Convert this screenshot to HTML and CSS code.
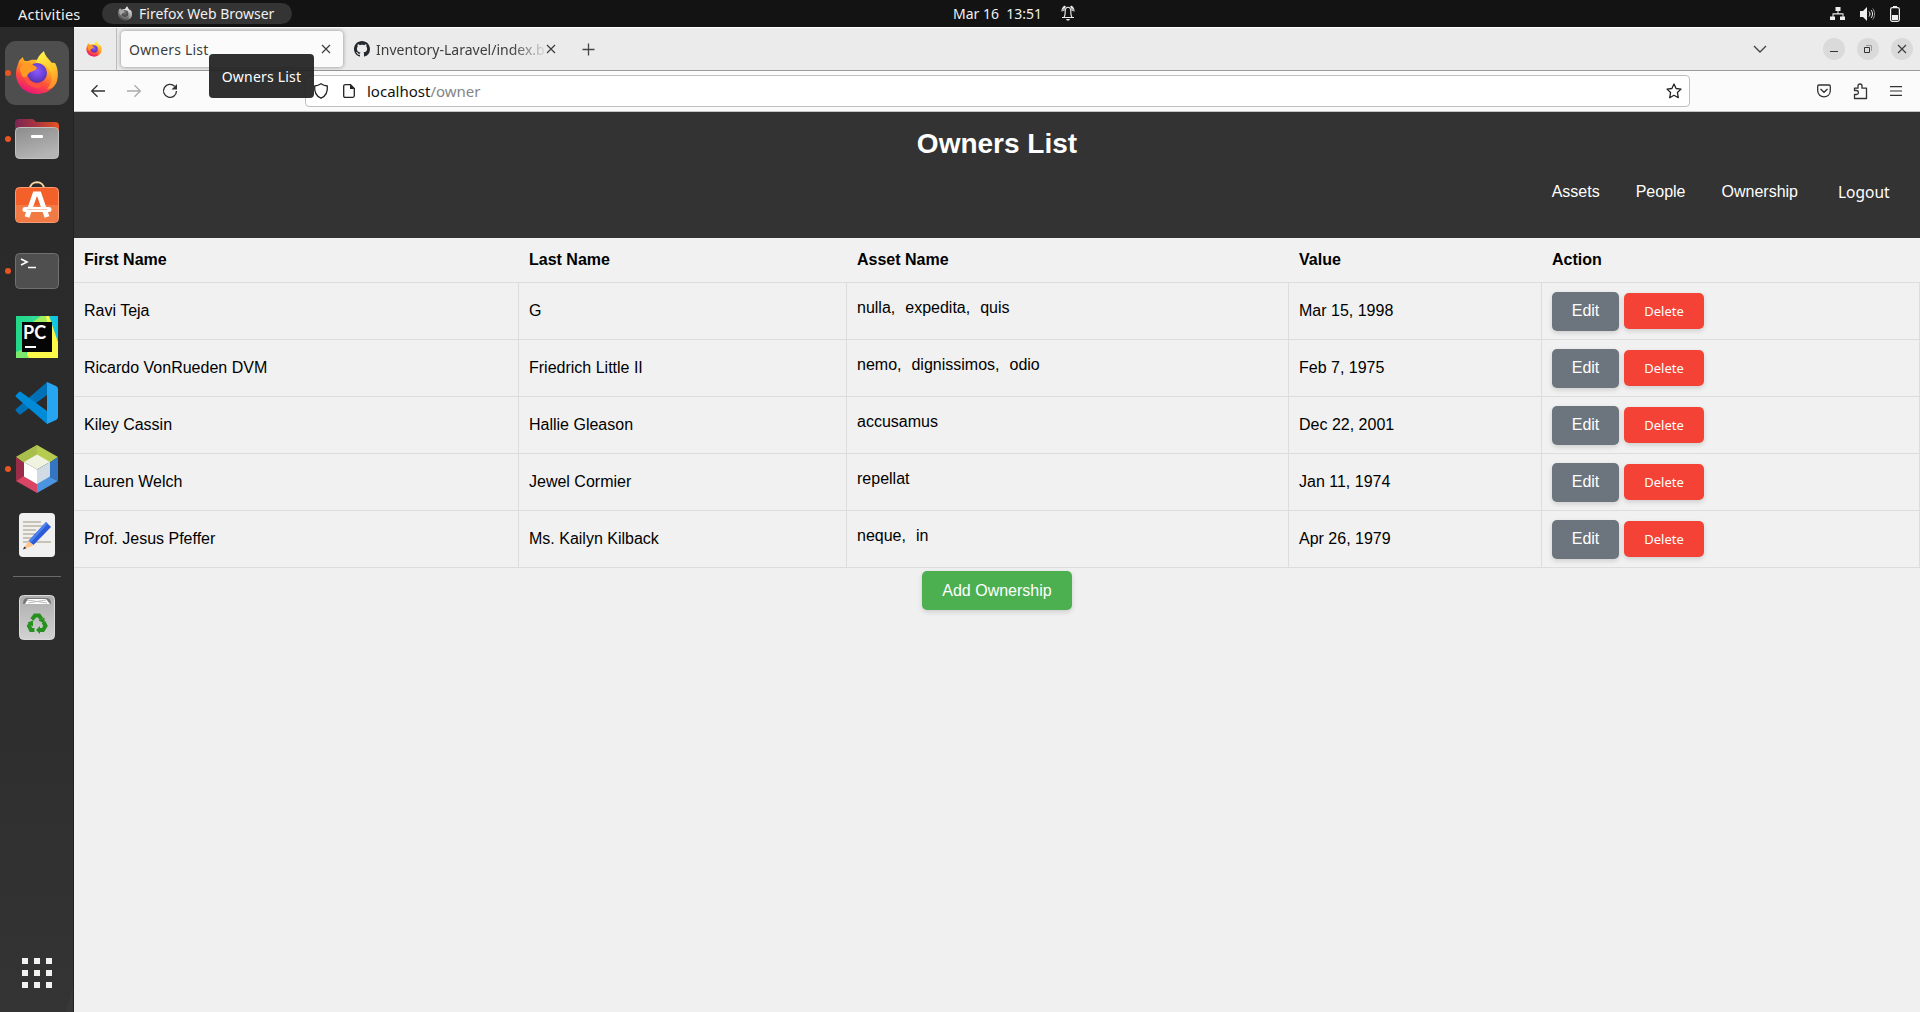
FILE: index.html
```html
<!DOCTYPE html>
<html lang="en">
<head>
<meta charset="utf-8">
<title>Owners List</title>
<link rel="stylesheet" href="styles.css">
</head>
<body>
<svg width="0" height="0" class="defs">
  <defs>
    <linearGradient id="ffBody" x1="0.8" y1="0" x2="0.3" y2="1"><stop offset="0" stop-color="#ffe43c"/><stop offset=".35" stop-color="#ffa423"/><stop offset=".65" stop-color="#ff4f3b"/><stop offset="1" stop-color="#e6127d"/></linearGradient>
    <linearGradient id="ffTail" x1="0.4" y1="0" x2="0.7" y2="1"><stop offset="0" stop-color="#fff24a"/><stop offset=".5" stop-color="#ffc72d"/><stop offset="1" stop-color="#ff8a2a"/></linearGradient>
    <radialGradient id="ffGlobe" cx=".5" cy=".4" r=".6"><stop offset="0" stop-color="#9059ff"/><stop offset=".6" stop-color="#6a42d8"/><stop offset="1" stop-color="#5b2fa8"/></radialGradient>
    <linearGradient id="folderBack"><stop offset="0" stop-color="#7b2653"/><stop offset=".5" stop-color="#a8343f"/><stop offset="1" stop-color="#e95420"/></linearGradient>
    <linearGradient id="folderFront" x2="0.4" y2="1"><stop offset="0" stop-color="#8c8c8c"/><stop offset="1" stop-color="#b4b4b4"/></linearGradient>
    <linearGradient id="trashBody" x2="0" y2="1"><stop offset="0" stop-color="#adadad"/><stop offset="1" stop-color="#d2d2d2"/></linearGradient>
    <linearGradient id="pcBack" x2="1"><stop offset="0" stop-color="#21d789"/><stop offset=".55" stop-color="#35dc9a"/><stop offset="1" stop-color="#07c3f2"/></linearGradient>
    <symbol id="firefox" viewBox="0 0 42 44">
      <path fill="url(#ffBody)" d="M3 10c1-2 3-3 4-4 0 2 1 3 2 4 2 0 4 0 6-1 0 0 8-1 12 2l12 1c4 7 4 17-2 24-4 5-10 7-16 7C9 43 0 34 0 23 0 17 2 14 3 10z"/>
      <path fill="url(#ffTail)" d="M20 12C21 7 24 3 28 0c1 5 4 7 7 11 2 2 2 4 3 3 4 5 5 15 1 20-2 3-5 4-8 4 5-5 6-13 3-18-3-6-8-8-14-8z"/>
      <circle cx="21" cy="22" r="10" fill="url(#ffGlobe)"/>
      <path fill="#ff9a22" d="M4 17c3-4 8-6 12-4 2 2 4 2 5 4-1 3-5 3-8 5-2 2-3 4-2 6-4-1-7-5-7-11z"/>
      <path fill="none" stroke="#ff5040" stroke-width="4" d="M10 26c2 7 9 10 15 8"/>
    </symbol>
    <symbol id="cross" viewBox="0 0 10 10"><path d="M1 1l8 8M9 1L1 9" fill="none" stroke="currentColor" stroke-width="1.2"/></symbol>
  </defs>
</svg>

<header class="topbar">
  <span class="activities">Activities</span>
  <span class="app-pill"><svg class="pill-icon" width="14" height="15"><use href="#firefox"/></svg><span>Firefox Web Browser</span></span>
  <span class="clock">Mar 16&nbsp; 13:51</span>
  <svg class="bell" width="14" height="16" viewBox="0 0 14 16" fill="none" stroke="#eee" stroke-width="1.1"><path d="M1 12.5h12M3 12c1-1 1.2-3 1.2-5.500C4.200 3.500 5 2.200 7 2.200s2.800 1.300 2.800 4.300C9.800 9 10 11 11 12M3.700 1C1.800 2.300 1 4 1 6.500M10.300 1C12.200 2.300 13 4 13 6.500M4.500 1.300C3 2.500 2.700 4 2.700 6M9.500 1.300c1.500 1.200 1.800 2.700 1.800 4.700"/><path d="M5 14h4l-1 1.500H6z" fill="#eee" stroke="none"/></svg>
  <div class="tray">
    <svg width="16" height="14" viewBox="0 0 16 14" fill="#eee"><path d="M5.500 0h5v4h-2v2.300h5V9.500H15V13h-5V9.500h2.500V7.500h-9v2H5V13H0V9.500h2.500V6.300h5V4h-2z"/></svg>
    <svg width="16" height="14" viewBox="0 0 16 14"><path d="M0 4h3l4-4v14l-4-4H0z" fill="#eee"/><path d="M9 4.500c1.300 1.500 1.300 3.500 0 5M11 3c2 2.300 2 5.700 0 8" fill="none" stroke="#eee"/><path d="M12.700 1.500c2.500 3 2.500 8 0 11" fill="none" stroke="#999"/></svg>
    <svg width="10" height="16" viewBox="0 0 10 16"><path d="M3 0h4v2H3z" fill="#eee"/><rect x=".6" y="1.600" width="8.800" height="13.800" rx="1.800" fill="none" stroke="#eee" stroke-width="1.2"/><path d="M2 9h6v5H2z" fill="#eee"/></svg>
  </div>
</header>

<div class="desktop">
  <nav class="dock">
    <div class="tile active running"><svg width="42" height="44"><use href="#firefox"/></svg></div>
    <div class="tile running"><svg width="48" height="48" viewBox="0 0 48 48"><path d="M2 8q0-4 4-4h13q2 0 3 2l1 1h19q4 0 4 4v10H2z" fill="url(#folderBack)"/><rect x="2.500" y="12.500" width="43" height="31" rx="4" fill="url(#folderFront)" stroke="#c0c0c0"/><rect x="18" y="20" width="12" height="3" rx="1" fill="#fff"/></svg></div>
    <div class="tile"><svg width="48" height="48" viewBox="0 0 48 48"><path d="M17 8c0-9 14-9 14 0" fill="none" stroke="#f9d9a8" stroke-width="2"/><rect x="2.500" y="6.500" width="43" height="35" rx="4" fill="#f3602a" stroke="#f69b74"/><path d="M3 24h42v13q0 4-4 4H7q-4 0-4-4z" fill="#f27b45"/><path d="M14 36l8-23h4l8 23" fill="none" stroke="#fff" stroke-width="5"/><path d="M12 28.500h24" stroke="#fff" stroke-width="5" stroke-linecap="round"/><path d="M14 28.500h20" stroke="#f8c6af"/></svg></div>
    <div class="tile running"><svg width="48" height="48" viewBox="0 0 48 48"><rect x="2.500" y="6.500" width="43" height="35" rx="4" fill="#4f4f4f" stroke="#707070"/><path d="M8 12l6 3-6 3M15 20.500h8" fill="none" stroke="#fff" stroke-width="1.600"/></svg></div>
    <div class="tile"><svg width="48" height="48" viewBox="0 0 48 48"><path d="M3 3h42v42H3z" fill="url(#pcBack)"/><path d="M28 7l3-4h5l9 26v16H12z" fill="#fcf84a"/><path d="M17 11L28 3h5l2 10z" fill="#a5ed60"/><path d="M3 39l8-3 5 9H3z" fill="#7be76b"/><path d="M9 9h30v30H9z" fill="#050505"/><text x="10" y="25.500" class="pc-text">PC</text><path d="M12 33h11v2H12z" fill="#fff"/></svg></div>
    <div class="tile"><svg width="48" height="48" viewBox="0 0 48 48"><path d="M34 3v13L8 35q-1 1-2 0l-3-3q-1-1 0-2z" fill="#0070b7"/><path d="M8 13q-1-1-2 0l-3 3q-1 1 0 2l31 27V32z" fill="#008bd8"/><path d="M34 3l9 4q2 1 2 3v28q0 2-2 3l-9 4z" fill="#28a5f1"/></svg></div>
    <div class="tile running"><svg width="48" height="48" viewBox="0 0 48 48"><path d="M3 12L24 0v12z" fill="#a9c14d"/><path d="M24 0l21 12-9 6-12-7z" fill="#b4cd50"/><path d="M24 0v11l-13 7-8-6z" fill="#a9bf4b"/><path d="M3 12l8 6v14l-8 4z" fill="#9a2c48"/><path d="M3 36l8-5 13 7v10z" fill="#d94665"/><path d="M45 36l-9-5-12 7v10z" fill="#4b95e0"/><path d="M45 12l-9 6v14l9 4z" fill="#3475c3"/><path d="M24 9.500L37 17l-13 7.500L11 17z" fill="#eff3df"/><path d="M11 17l13 7.500V39l-13-7.500z" fill="#fff"/><path d="M37 17l-13 7.500V39l13-7.500z" fill="#d0dbe4"/></svg></div>
    <div class="tile"><svg width="48" height="48" viewBox="0 0 48 48"><rect x="6" y="2" width="36" height="44" rx="4" fill="#f0f0f0"/><path d="M10 11h18M10 15h21M10 19h13M10 23h16M10 27h10M10 31h28" stroke="#c7c3b5" stroke-width="2"/><path d="M15.500 30L33 11l5 5-17.500 18z" fill="#2c5bd8"/><path d="M15.500 30L33 11l1.700 1.700L17.500 32z" fill="#4b80f0"/><path d="M15.500 30l5 4.500L10 38.500z" fill="#ffc58b"/><path d="M11.300 35.500l2 1.800-3.300 1.200z" fill="#333"/></svg></div>
    <hr class="dock-line">
    <div class="tile"><svg width="48" height="48" viewBox="0 0 48 48"><rect x="6.500" y="1.500" width="35" height="44" rx="4" fill="url(#trashBody)" stroke="#dadada"/><path d="M10 10q0-6 4-6h20q4 0 4 6z" fill="#777"/><path d="M12 10l3-5h18l4 5z" fill="#fff"/><path d="M14 6l20 3M15 9l18-3" stroke="#bbb"/><g fill="none" stroke="#26911f" stroke-width="4"><path d="M19 25.500l3-4h4l2.500 3.500"/><path d="M30.500 28l2 4-2.500 4h-4"/><path d="M21.500 36H18l-2-4 2-3"/></g><path d="M25.500 26.500l6-3v6zM27 32v8l-4-4zM14.500 28.500l5.500-2v6z" fill="#26911f"/></svg></div>
    <div class="tile apps"><svg width="30" height="30" viewBox="0 0 30 30"><path d="M3 0v30M15 0v30M27 0v30" stroke="#f2f2f0" stroke-width="6" stroke-dasharray="6 6"/></svg></div>
  </nav>

  <div class="window">
    <div class="tabstrip">
      <div class="pinned"><svg width="16" height="16"><use href="#firefox"/></svg></div>
      <div class="tab selected"><span class="tab-title">Owners List</span><svg class="close" width="10" height="10"><use href="#cross"/></svg>
        <div class="tooltip">Owners List</div>
      </div>
      <div class="tab second">
        <svg width="16" height="16" viewBox="0 0 16 16"><path fill="#24292f" d="M8 0C3.580 0 0 3.580 0 8c0 3.540 2.290 6.530 5.470 7.590.4.070.55-.17.55-.38 0-.19-.01-.82-.01-1.490-2.010.37-2.530-.49-2.690-.94-.09-.23-.48-.94-.82-1.130-.28-.15-.68-.52-.01-.53.63-.01 1.080.58 1.230.82.720 1.210 1.870.87 2.330.66.070-.52.28-.87.510-1.070-1.780-.2-3.640-.89-3.640-3.950 0-.87.310-1.590.82-2.150-.08-.2-.36-1.020.08-2.120 0 0 .67-.21 2.200.82.640-.18 1.320-.27 2-.27s1.360.09 2 .27c1.530-1.040 2.200-.82 2.200-.82.440 1.100.16 1.920.08 2.120.51.560.82 1.270.82 2.150 0 3.070-1.870 3.750-3.650 3.950.29.250.54.730.54 1.480 0 1.070-.01 1.930-.01 2.200 0 .21.150.46.550.38A8.010 8.010 0 0016 8c0-4.420-3.580-8-8-8z"/></svg>
        <span class="tab-title fading">Inventory-Laravel/index.b</span>
        <svg class="close2" width="10" height="10"><use href="#cross"/></svg>
      </div>
      <svg class="plus" width="13" height="13" viewBox="0 0 13 13"><path d="M6.500.5v12M.5 6.500h12" stroke="#444" stroke-width="1.300"/></svg>
      <svg class="chevron" width="14" height="8" viewBox="0 0 14 8"><path d="M1 1l6 6 6-6" fill="none" stroke="#444" stroke-width="1.400"/></svg>
      <div class="controls">
        <span class="ctl"><svg width="10" height="10"><path d="M1 7.500h8" stroke="#333"/></svg></span>
        <span class="ctl"><svg width="10" height="10"><path d="M1.500 3.500h5v5h-5z" fill="none" stroke="#333"/><path d="M3 1.500h5.500V7" fill="none" stroke="#999"/></svg></span>
        <span class="ctl"><svg width="10" height="10"><use href="#cross"/></svg></span>
      </div>
    </div>

    <div class="toolbar">
      <svg width="16" height="14" viewBox="0 0 16 14" fill="none" stroke="#333" stroke-width="1.300"><path d="M15 7H2M7.500 1.200L1.700 7l5.800 5.800"/></svg>
      <svg width="16" height="14" viewBox="0 0 16 14" fill="none" stroke="#aaa" stroke-width="1.300"><path d="M1 7h13M8.500 1.200L14.300 7l-5.800 5.800"/></svg>
      <svg width="16" height="16" viewBox="0 0 16 16"><path d="M12.600 3.300A6.500 6.500 0 1014.500 8" fill="none" stroke="#333" stroke-width="1.300"/><path d="M15 1v5.500H9.500z" fill="#333"/></svg>
      <div class="urlbar">
        <svg width="16" height="16" viewBox="0 0 16 16" fill="none" stroke="#222" stroke-width="1.300"><path d="M8 .8c2 1.400 4 2 6.300 2.200.5 5.500-1 10-6.300 12.200C2.700 13 1.200 8.500 1.700 3 4 2.800 6 2.200 8 .8z"/></svg>
        <svg width="12" height="14" viewBox="0 0 12 14"><path d="M2.500.7H7.500l3.800 3.800v7.300q0 1.500-1.500 1.500H2.200Q.7 13.300.7 11.800V2.200Q.7.700 2.500.7z" fill="none" stroke="#222" stroke-width="1.300"/><path d="M7 .5v4.500h4.500z" fill="#222"/></svg>
        <span class="url">localhost<span class="path">/owner</span></span>
        <svg class="star" width="16" height="16" viewBox="0 0 16 16"><path d="M8 1l2.100 4.500 4.900.6-3.600 3.400.9 5.200L8 12.300l-4.300 2.400.9-5.200L1 6.100l4.900-.6z" fill="none" stroke="#222" stroke-width="1.300" stroke-linejoin="round"/></svg>
      </div>
      <div class="tools">
        <svg width="14" height="14" viewBox="0 0 14 14" fill="none" stroke="#333" stroke-width="1.300"><path d="M2 1h10q1.300 0 1.300 1.300V6.500c0 8.500-12.600 8.500-12.600 0V2.300Q.7 1 2 1zM3.500 5L7 8.300 10.500 5"/></svg>
        <svg width="15" height="17" viewBox="0 0 15 17" fill="none" stroke="#333" stroke-width="1.300"><path d="M1.500 5.200H5V3q0-2 2-2t2 2v2.200h4.500V15.500H1.500v-4H3.500q2-.3 2-2t-2-2h-2z" stroke-linejoin="round"/></svg>
        <svg width="12" height="10" viewBox="0 0 12 10"><path d="M0 .7h12M0 5h12M0 9.300h12" stroke="#333" stroke-width="1.200"/></svg>
      </div>
    </div>

    <main class="page">
      <div class="banner">
        <h1>Owners List</h1>
        <div class="links"><a>Assets</a><a>People</a><a>Ownership</a><a class="logout">Logout</a></div>
      </div>
      <table class="owners">
        <colgroup><col class="c1"><col class="c2"><col class="c3"><col class="c4"><col class="c5"></colgroup>
        <thead><tr><th>First Name</th><th>Last Name</th><th>Asset Name</th><th>Value</th><th>Action</th></tr></thead>
        <tbody>
          <tr><td>Ravi Teja</td><td>G</td><td class="assets"><span>nulla,</span><span>expedita,</span><span>quis</span></td><td>Mar 15, 1998</td><td><div class="actions"><a class="btn edit">Edit</a><a class="btn delete">Delete</a></div></td></tr>
          <tr><td>Ricardo VonRueden DVM</td><td>Friedrich Little II</td><td class="assets"><span>nemo,</span><span>dignissimos,</span><span>odio</span></td><td>Feb 7, 1975</td><td><div class="actions"><a class="btn edit">Edit</a><a class="btn delete">Delete</a></div></td></tr>
          <tr><td>Kiley Cassin</td><td>Hallie Gleason</td><td class="assets"><span>accusamus</span></td><td>Dec 22, 2001</td><td><div class="actions"><a class="btn edit">Edit</a><a class="btn delete">Delete</a></div></td></tr>
          <tr><td>Lauren Welch</td><td>Jewel Cormier</td><td class="assets"><span>repellat</span></td><td>Jan 11, 1974</td><td><div class="actions"><a class="btn edit">Edit</a><a class="btn delete">Delete</a></div></td></tr>
          <tr><td>Prof. Jesus Pfeffer</td><td>Ms. Kailyn Kilback</td><td class="assets"><span>neque,</span><span>in</span></td><td>Apr 26, 1979</td><td><div class="actions"><a class="btn edit">Edit</a><a class="btn delete">Delete</a></div></td></tr>
        </tbody>
      </table>
      <div class="add-row"><a class="btn add">Add Ownership</a></div>
    </main>
  </div>
</div>
</body>
</html>
```
FILE: styles.css
```css
* { box-sizing: border-box; }
body { margin: 0; height: 1012px; overflow: hidden; display: flex; flex-direction: column; font-family: "Noto Sans", sans-serif; background: #f0f0f0; }
svg { display: block; flex: none; }
.defs { position: absolute; }

.topbar { flex: none; height: 27px; background: #131313; color: #f0f0f0; display: flex; align-items: center; font-size: 14px; white-space: nowrap; }
.activities { margin-left: 18px; width: 84px; font-size: 14.5px; letter-spacing: .2px; }
.app-pill { width: 190px; height: 21px; border-radius: 11px; background: #343434; display: flex; align-items: center; gap: 7px; padding-left: 16px; }
.pill-icon { filter: grayscale(1); }
.clock { margin-left: 661px; width: 108px; }
.bell { margin-top: -1px; }
.tray { margin-left: auto; padding-right: 20px; display: flex; align-items: center; gap: 14px; }

.desktop { flex: 1; display: flex; min-height: 0; }
.dock { width: 74px; flex: none; background: linear-gradient(105deg, transparent 0 98%, rgba(255,255,255,.02) 98%), linear-gradient(#292929, #2c2c2c 60%, #343434); padding: 14px 5px 7px; display: flex; flex-direction: column; gap: 2px; border-right: 1px solid #222; }
.tile { width: 64px; height: 64px; flex: none; border-radius: 11px; display: flex; align-items: center; justify-content: center; position: relative; }
.tile.active { background: #4e4e4e; }
.running::before { content: ""; position: absolute; left: 0; top: 29px; width: 6px; height: 6px; border-radius: 50%; background: #e95420; }
.dock-line { width: 48px; height: 1px; border: 0; background: #6a6a6a; margin: 7px 8px; }
.apps { margin-top: auto; }
.pc-text { font: bold 18px Lato, sans-serif; fill: #fff; }

.window { flex: 1; min-width: 0; display: flex; flex-direction: column; }
.tabstrip { height: 44px; flex: none; background: #ebebeb; border-top: 1px solid #fff; border-bottom: 1px solid #9b9b9b; display: flex; align-items: center; font-size: 14px; color: #3d3d3d; }
.pinned { width: 43px; align-self: stretch; display: flex; align-items: center; padding-left: 12px; border-right: 1px solid #bcbcbc; }
.tab { display: flex; align-items: center; white-space: nowrap; }
.selected { position: relative; width: 222px; height: 36px; margin-left: 4px; border-radius: 4px; background: #fbfbfb; box-shadow: 0 0 4px rgba(0,0,0,.4); padding: 0 12px 0 8px; justify-content: space-between; }
.selected .tab-title { letter-spacing: .2px; }
.tooltip { position: absolute; left: 88px; top: 23px; z-index: 5; width: 105px; height: 44px; border-radius: 4px; background: rgba(32,32,32,.93); color: #fff; display: flex; align-items: center; justify-content: center; letter-spacing: .2px; }
.second { margin-left: 11px; width: 202px; }
.fading { width: 169px; margin-left: 6px; overflow: hidden; -webkit-mask-image: linear-gradient(90deg, #000 80%, transparent 102%); mask-image: linear-gradient(90deg, #000 80%, transparent 102%); }
.close2 { margin-left: 1px; }
.plus { margin-left: 26px; }
.chevron { margin-left: auto; }
.controls { display: flex; gap: 12px; margin: 0 7px 0 56px; }
.ctl { width: 22px; height: 22px; border-radius: 50%; background: #dadada; display: flex; align-items: center; justify-content: center; }

.toolbar { height: 41px; flex: none; background: #fbfbfb; border-bottom: 1px solid #c4c4c4; display: flex; align-items: center; gap: 20px; padding-left: 16px; }
.urlbar { width: 1385px; height: 32px; margin-left: 107px; border: 1px solid #bfbfbf; border-radius: 4px; background: #fff; display: flex; align-items: center; padding: 0 7px; }
.urlbar svg + svg { margin-left: 14px; }
.url { margin-left: 12px; font-size: 15px; color: #111; }
.path { color: #858585; }
.star { margin-left: auto; }
.tools { display: flex; align-items: center; gap: 22px; margin-left: 107px; }

.page { flex: 1; background: #f0f0f0; font-family: "Liberation Sans", Arial, sans-serif; font-size: 16px; color: #000; }
.banner { height: 126px; background: #333; color: #fff; padding-top: 16px; }
h1 { margin: 0; font-size: 28px; line-height: 32px; text-align: center; }
.links { display: flex; justify-content: flex-end; margin-top: 22px; padding-right: 30px; line-height: 20px; }
.links a { margin-left: 36px; }
.links .logout { margin-left: 40px; width: 52px; font-family: "Noto Sans", sans-serif; font-size: 15.5px; }
.owners { width: 1846px; table-layout: fixed; border-spacing: 0; background: #f1f1f1; }
.c1 { width: 445px; } .c2 { width: 328px; } .c3 { width: 442px; } .c4 { width: 253px; } .c5 { width: 378px; }
th { height: 45px; padding: 0 10px; text-align: left; border-bottom: 1px solid #ddd; }
td { height: 57px; padding: 0 10px; border-bottom: 1px solid #ddd; border-right: 1px solid #ddd; }
td.assets { padding-bottom: 7px; }
.assets span + span { margin-left: 10px; }
.actions { display: flex; align-items: center; gap: 5px; }
.btn { display: inline-flex; align-items: center; justify-content: center; border-radius: 5px; color: #fff; box-shadow: 0 2px 5px rgba(0,0,0,.15); }
.edit { width: 67px; height: 39px; background: #6c757d; }
.delete { width: 80px; height: 36px; background: #f44336; font: 13px "Noto Sans", sans-serif; }
.add-row { display: flex; justify-content: center; padding-top: 3px; }
.add { width: 150px; height: 39px; background: #4caf50; }
```
